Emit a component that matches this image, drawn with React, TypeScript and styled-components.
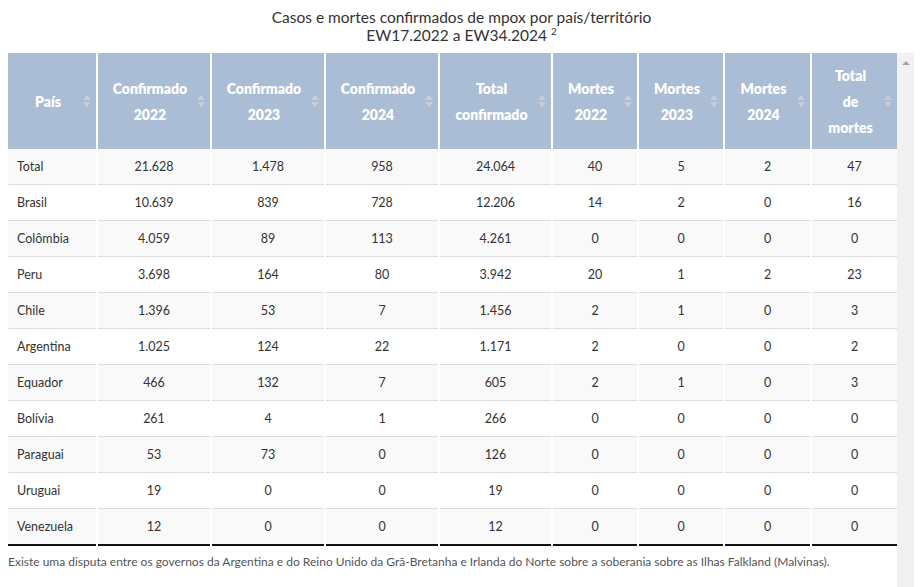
import styled, { createGlobalStyle } from "styled-components";

const GlobalStyle = createGlobalStyle`
  html, body {
    margin: 0;
    padding: 0;
    background: #fff;
  }
  body {
    font-family: Lato, "Open Sans", sans-serif;
    color: #333;
  }
`;

interface Row {
  pais: string;
  values: string[];
}

const rows: Row[] = [
  { pais: "Total", values: ["21.628", "1.478", "958", "24.064", "40", "5", "2", "47"] },
  { pais: "Brasil", values: ["10.639", "839", "728", "12.206", "14", "2", "0", "16"] },
  { pais: "Colômbia", values: ["4.059", "89", "113", "4.261", "0", "0", "0", "0"] },
  { pais: "Peru", values: ["3.698", "164", "80", "3.942", "20", "1", "2", "23"] },
  { pais: "Chile", values: ["1.396", "53", "7", "1.456", "2", "1", "0", "3"] },
  { pais: "Argentina", values: ["1.025", "124", "22", "1.171", "2", "0", "0", "2"] },
  { pais: "Equador", values: ["466", "132", "7", "605", "2", "1", "0", "3"] },
  { pais: "Bolívia", values: ["261", "4", "1", "266", "0", "0", "0", "0"] },
  { pais: "Paraguai", values: ["53", "73", "0", "126", "0", "0", "0", "0"] },
  { pais: "Uruguai", values: ["19", "0", "0", "19", "0", "0", "0", "0"] },
  { pais: "Venezuela", values: ["12", "0", "0", "12", "0", "0", "0", "0"] },
];

const columns = [
  { label: ["País"], width: 89 },
  { label: ["Confirmado", "2022"], width: 114 },
  { label: ["Confirmado", "2023"], width: 114 },
  { label: ["Confirmado", "2024"], width: 114 },
  { label: ["Total", "confirmado"], width: 113 },
  { label: ["Mortes", "2022"], width: 86 },
  { label: ["Mortes", "2023"], width: 86 },
  { label: ["Mortes", "2024"], width: 87 },
  { label: ["Total", "de", "mortes"], width: 86 },
];

const Page = styled.div`
  width: 923px;
`;

const Title = styled.div`
  width: 923px;
  padding-top: 8px;
  height: 53px;
  box-sizing: border-box;
  text-align: center;
  font-size: 15.5px;
  line-height: 18px;
  color: #333;

  sup {
    font-size: 10px;
    vertical-align: top;
    position: relative;
    top: -4px;
  }
`;

const Body = styled.div`
  display: flex;
  align-items: stretch;
  height: 534px;
`;

const Scroller = styled.div`
  width: 889px;
  margin-left: 8px;
`;

const Table = styled.table`
  width: 889px;
  border-collapse: collapse;
  table-layout: fixed;
  font-size: 12.5px;
  border-bottom: 2px solid #111;
`;

const HeadCell = styled.th`
  background: #abbdd4;
  color: #fff;
  font-weight: 800;
  font-size: 14px;
  line-height: 26px;
  height: 96px;
  padding: 1px 16px 0 8px;
  border-left: 2px solid #fff;
  position: relative;
  text-align: center;
  box-sizing: border-box;

  &:first-child {
    border-left: none;
  }
`;

const SortIcon = styled.span`
  position: absolute;
  right: 5px;
  top: 50%;
  margin-top: -6px;
  width: 8px;
  height: 12px;
  display: flex;
  flex-direction: column;
  justify-content: space-between;

  &::before,
  &::after {
    content: "";
    display: block;
    width: 0;
    height: 0;
    border-left: 4px solid transparent;
    border-right: 4px solid transparent;
  }
  &::before {
    border-bottom: 5px solid #c8cdd5;
  }
  &::after {
    border-top: 5px solid #c8cdd5;
  }
`;

const BodyRow = styled.tr<{ $striped: boolean }>`
  background: ${(p) => (p.$striped ? "#f9f9f9" : "#fff")};
  border-top: 1px solid #ddd;

  &:first-child {
    border-top: none;
  }
`;

const Cell = styled.td<{ $left?: boolean }>`
  height: 35px;
  padding: 0 8px 0 ${(p) => (p.$left ? "9px" : "8px")};
  text-align: ${(p) => (p.$left ? "left" : "center")};
  border-left: ${(p) => (p.$left ? "none" : "2px solid #fff")};
  color: #333;
`;

const Note = styled.p`
  margin: 8px 0 0;
  font-size: 12px;
  color: #555;
`;

const ScrollTrack = styled.div`
  width: 17px;
  background: #f1f1f1;
  position: relative;

  &::before {
    content: "";
    position: absolute;
    left: 5px;
    top: 8px;
    border-left: 4px solid transparent;
    border-right: 4px solid transparent;
    border-bottom: 4px solid #a3a3a3;
  }
`;

export default function App() {
  return (
    <Page>
      <GlobalStyle />
      <Title>
        Casos e mortes confirmados de mpox por país/território
        <br />
        EW17.2022 a EW34.2024 <sup>2</sup>
      </Title>
      <Body>
        <Scroller>
          <Table>
            <colgroup>
              {columns.map((c, i) => (
                <col key={i} style={{ width: c.width }} />
              ))}
            </colgroup>
            <thead>
              <tr>
                {columns.map((c, i) => (
                  <HeadCell key={i}>
                    {c.label.map((l, j) => (
                      <div key={j}>{l}</div>
                    ))}
                    <SortIcon />
                  </HeadCell>
                ))}
              </tr>
            </thead>
            <tbody>
              {rows.map((r, i) => (
                <BodyRow key={r.pais} $striped={i % 2 === 0}>
                  <Cell $left>{r.pais}</Cell>
                  {r.values.map((v, j) => (
                    <Cell key={j}>{v}</Cell>
                  ))}
                </BodyRow>
              ))}
            </tbody>
          </Table>
          <Note>
            Existe uma disputa entre os governos da Argentina e do Reino Unido da Grã-Bretanha e Irlanda do Norte sobre a soberania sobre as Ilhas Falkland (Malvinas).
          </Note>
        </Scroller>
        <ScrollTrack />
      </Body>
    </Page>
  );
}
